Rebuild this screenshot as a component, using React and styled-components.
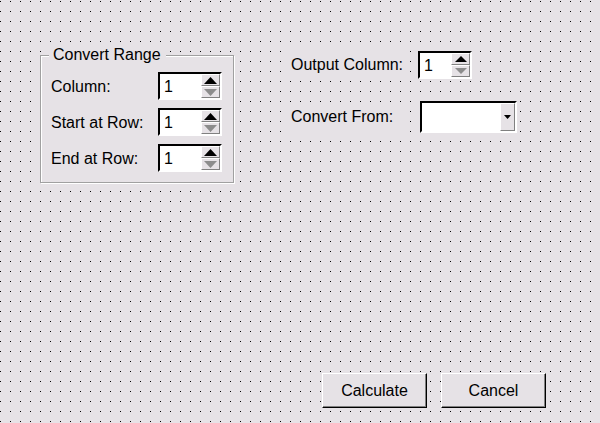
import React from "react";
import styled, { createGlobalStyle } from "styled-components";

const BG = "#e6e2e6";

const Global = createGlobalStyle`
  html, body { margin: 0; padding: 0; }
  body { font-family: "Liberation Sans", Arial, sans-serif; }
`;

const Window = styled.div`
  width: 600px;
  height: 423px;
  box-sizing: border-box;
  display: flex;
  flex-direction: column;
  background-color: ${BG};
  background-image: conic-gradient(at 1px 1px, transparent 270deg, #000 0);
  background-size: 10px 10px;
  background-position: 0 1px;
  font-family: "Liberation Sans", Arial, sans-serif;
  font-size: 16px;
  color: #000;
  overflow: hidden;
`;

const TopArea = styled.div`
  display: flex;
  align-items: flex-start;
  padding-left: 40px;
  gap: 49px;
`;

const GroupBox = styled.div`
  position: relative;
  margin-top: 55px;
  width: 194px;
  box-sizing: border-box;
  border: 1px solid #a0a0a0;
  box-shadow: inset 1px 1px 0 #fff, 1px 1px 0 #fff;
  background: ${BG};
  padding: 16px 11px 10px 10px;
  display: flex;
  flex-direction: column;
  gap: 8px;
`;

const GroupTitle = styled.span`
  position: absolute;
  top: -10px;
  left: 8px;
  padding: 0 5px 0 4px;
  line-height: 18px;
  background: ${BG};
`;

const FormRow = styled.div`
  display: flex;
  align-items: center;
  height: ${(p) => p.$h || 28}px;
`;

const GroupLabel = styled.span`
  width: 107px;
  line-height: 18px;
  padding-top: 2px;
`;

const RightColumn = styled.div`
  display: flex;
  flex-direction: column;
  padding-top: 50px;
  gap: 21px;
`;

const SideLabel = styled.span`
  width: 125px;
  box-sizing: border-box;
  padding: 6px 0 6px 8px;
  line-height: 18px;
  background: ${BG};
  margin-right: ${(p) => p.$gap}px;
`;

const SunkenFrame = styled.div`
  display: flex;
  width: ${(p) => p.$w}px;
  height: ${(p) => p.$h}px;
  margin-left: ${(p) => p.$offset || 0}px;
  box-sizing: border-box;
  border: 2px solid;
  border-color: #000 #fff #fff #000;
  background: #fff;
`;

const Field = styled.div`
  flex: 1;
  display: flex;
  align-items: center;
  padding: 2px 0 0 4px;
  background: #fff;
  line-height: 18px;
`;

const ArrowColumn = styled.div`
  width: ${(p) => p.$w}px;
  display: flex;
  flex-direction: column;
  background: ${BG};
`;

const ArrowButton = styled.div`
  flex: 1;
  box-sizing: border-box;
  border: 1px solid;
  border-color: #fff #808080 #808080 #fff;
  background: ${BG};
  display: flex;
  align-items: center;
  justify-content: center;
`;

const DropButton = styled.div`
  width: 15px;
  box-sizing: border-box;
  border: 1px solid;
  border-color: #fff #808080 #808080 #fff;
  background: ${BG};
  display: flex;
  align-items: center;
  justify-content: center;
`;

const ButtonBar = styled.div`
  margin-top: auto;
  display: flex;
  justify-content: flex-end;
  gap: 14px;
  padding: 0 54px 15px 0;
`;

const PushButton = styled.button`
  width: 105px;
  height: 35px;
  box-sizing: border-box;
  padding: 0;
  border: 1px solid;
  border-color: #fff #000 #000 #fff;
  box-shadow: inset -1px -1px 0 #808080;
  background: ${BG};
  font-family: "Liberation Sans", Arial, sans-serif;
  font-size: 16px;
  color: #000;
`;

function Tri({ up, w, color }) {
  const h = Math.round(w / 2);
  const pts = up ? `0,${h} ${w / 2},0 ${w},${h}` : `0,0 ${w / 2},${h} ${w},0`;
  return (
    <svg width={w} height={h} viewBox={`0 0 ${w} ${h}`} style={{ display: "block" }}>
      <polygon points={pts} fill={color} />
    </svg>
  );
}

function SpinBox({ width, arrowWidth, tri }) {
  return (
    <SunkenFrame $w={width} $h={28}>
      <Field>1</Field>
      <ArrowColumn $w={arrowWidth}>
        <ArrowButton>
          <Tri up w={tri} color="#000" />
        </ArrowButton>
        <ArrowButton>
          <Tri w={tri} color="#8c8c8c" />
        </ArrowButton>
      </ArrowColumn>
    </SunkenFrame>
  );
}

function ComboBox() {
  return (
    <SunkenFrame $w={97} $h={32} $offset={2}>
      <Field />
      <DropButton>
        <Tri w={7} color="#000" />
      </DropButton>
    </SunkenFrame>
  );
}

export default function App() {
  return (
    <>
      <Global />
      <Window>
        <TopArea>
          <GroupBox>
            <GroupTitle>Convert Range</GroupTitle>
            <FormRow>
              <GroupLabel>Column:</GroupLabel>
              <SpinBox width={64} arrowWidth={19} tri={13} />
            </FormRow>
            <FormRow>
              <GroupLabel>Start at Row:</GroupLabel>
              <SpinBox width={64} arrowWidth={19} tri={13} />
            </FormRow>
            <FormRow>
              <GroupLabel>End at Row:</GroupLabel>
              <SpinBox width={64} arrowWidth={19} tri={13} />
            </FormRow>
          </GroupBox>
          <RightColumn>
            <FormRow $h={30}>
              <SideLabel $gap={10}>Output Column:</SideLabel>
              <SpinBox width={54} arrowWidth={19} tri={12} />
            </FormRow>
            <FormRow $h={32}>
              <SideLabel $gap={10}>Convert From:</SideLabel>
              <ComboBox />
            </FormRow>
          </RightColumn>
        </TopArea>
        <ButtonBar>
          <PushButton>Calculate</PushButton>
          <PushButton>Cancel</PushButton>
        </ButtonBar>
      </Window>
    </>
  );
}
